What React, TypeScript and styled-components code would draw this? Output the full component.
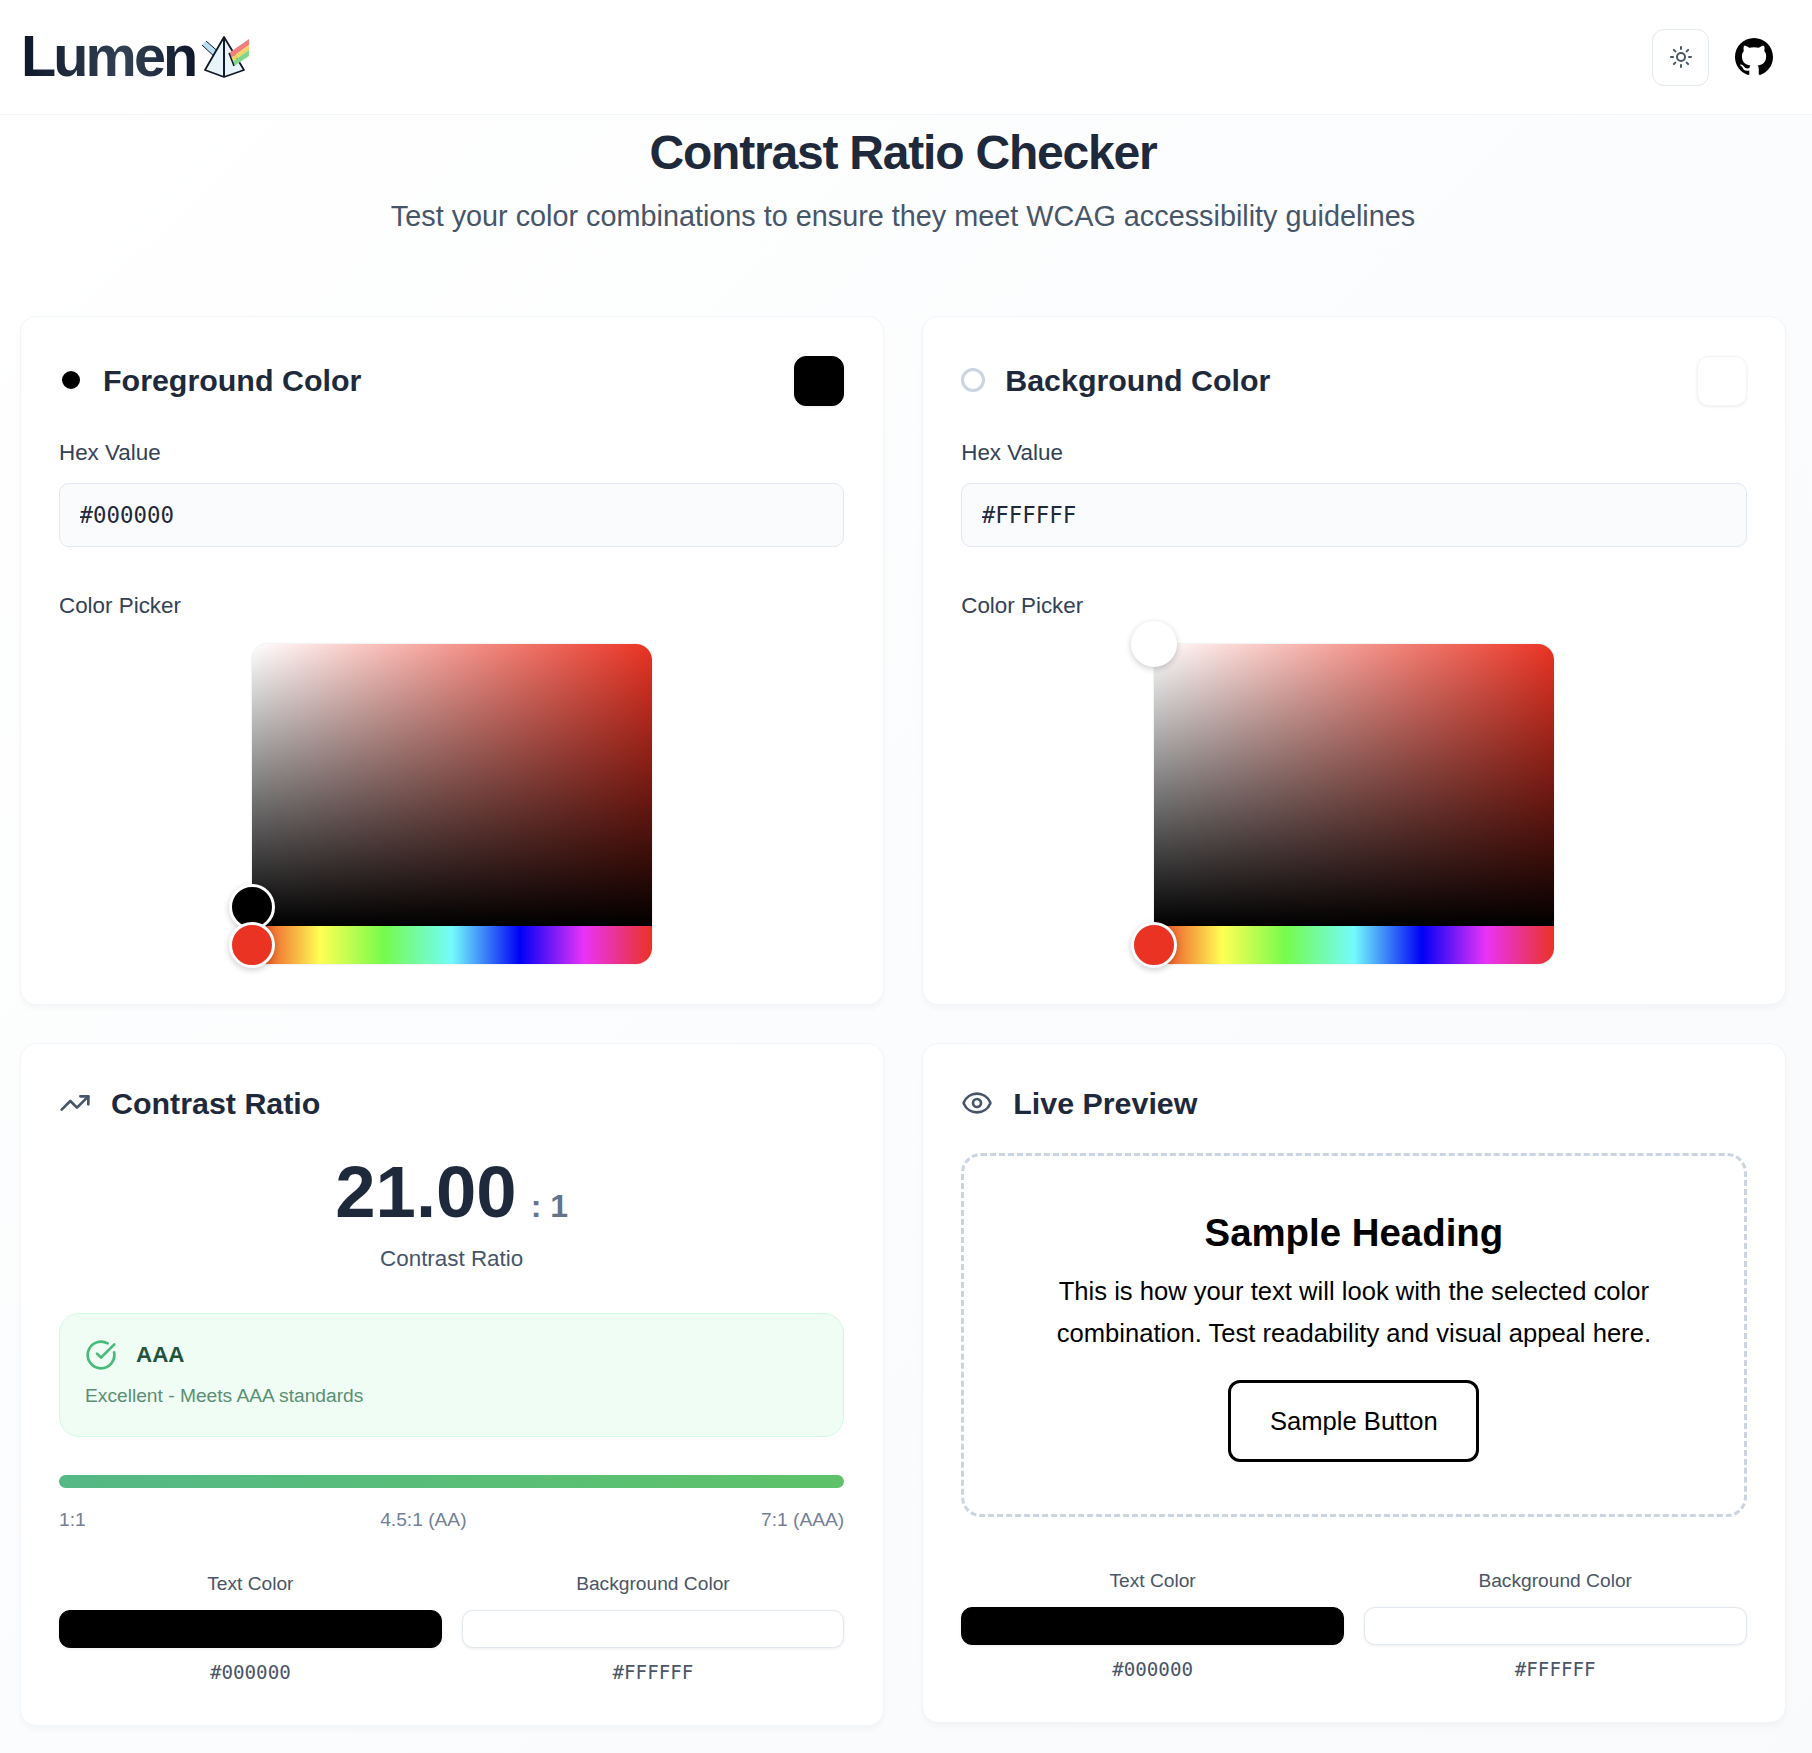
import React from 'react';
import styled, { createGlobalStyle } from 'styled-components';
import { Sun, TrendingUp, Eye, CircleCheckBig } from 'lucide-react';
import { BsGithub } from 'react-icons/bs';

const GlobalStyle = createGlobalStyle`
	* {
		box-sizing: border-box;
	}

	body {
		margin: 0;
		font-family: "Liberation Sans", Arial, sans-serif;
		color: #1e293b;
		background: linear-gradient(135deg, #ffffff 0%, #f8fafc 100%);
	}
`;

const Page = styled.div`
	min-height: 1753px;
`;

const Nav = styled.nav`
	display: flex;
	align-items: center;
	justify-content: space-between;
	height: 115px;
	padding: 0 39px 0 21px;
	background: #fff;
	border-bottom: 1px solid #f1f5f9;
`;

const Brand = styled.div`
	display: flex;
	align-items: center;
	gap: 5px;
`;

const BrandText = styled.span`
	font-size: 57.6px;
	font-weight: 700;
	line-height: 1;
	letter-spacing: -0.05em;
	background: linear-gradient(90deg, #0f172a, #334155 60%, #0f172a);
	-webkit-background-clip: text;
	background-clip: text;
	color: transparent;
`;

const NavActions = styled.div`
	display: flex;
	align-items: center;
	gap: 26px;
`;

const IconButton = styled.button`
	display: flex;
	align-items: center;
	justify-content: center;
	width: 57px;
	height: 57px;
	padding: 0;
	color: #475569;
	background: #fff;
	border: 1px solid #e2e8f0;
	border-radius: 12px;
`;

const GithubLink = styled.a`
	display: flex;
	color: #000;
`;

const Hero = styled.header`
	padding: 8px 6px 0 0;
	margin-bottom: 82px;
	text-align: center;
`;

const Title = styled.h1`
	margin: 0 0 15px;
	font-size: 48px;
	font-weight: 700;
	line-height: 60px;
	letter-spacing: -0.025em;
	color: #1e293b;
`;

const Subtitle = styled.p`
	margin: 0;
	font-size: 28.8px;
	line-height: 36px;
	color: #475569;
`;

const Grid = styled.main`
	display: grid;
	grid-template-columns: 1fr 1fr;
	align-items: start;
	gap: 38px 38px;
	padding: 0 26px 0 19.5px;
`;

const Card = styled.section`
	padding: 39px 38.5px;
	background: #fff;
	border: 1px solid #f1f5f9;
	border-radius: 16px;
	box-shadow: 0 4px 6px rgba(15, 23, 42, 0.03);
`;

const CardHead = styled.div<{ $gap: number }>`
	display: flex;
	align-items: center;
	justify-content: space-between;
	margin-bottom: ${(p) => p.$gap}px;
`;

const HeadLeft = styled.div`
	display: flex;
	align-items: center;
	gap: 20px;
`;

const ColorHeadLeft = styled(HeadLeft)`
	padding-bottom: 2px;
`;

const CardTitle = styled.h2`
	margin: 0;
	font-size: 30.4px;
	font-weight: 700;
	line-height: 40px;
	color: #1e293b;
`;

const Dot = styled.span<{ $color: string; $ring: string }>`
	display: block;
	width: 24px;
	height: 24px;
	background: ${(p) => p.$color};
	border: 3px solid ${(p) => p.$ring};
	border-radius: 50%;
`;

const HeaderSwatch = styled.div<{ $color: string }>`
	width: 50px;
	height: 50px;
	background: ${(p) => p.$color};
	border: 1px solid ${(p) => (p.$color === '#000' ? '#000' : '#f1f5f9')};
	border-radius: 12px;
	box-shadow: 0 1px 3px rgba(15, 23, 42, 0.08);
`;

const FieldLabel = styled.label`
	display: block;
	margin-bottom: 17px;
	font-size: 22.4px;
	line-height: 28px;
	color: #334155;
`;

const HexLabel = styled(FieldLabel)`
	margin-top: 33px;
	margin-bottom: 16px;
`;

const HexInput = styled.input`
	display: block;
	width: 100%;
	height: 64px;
	margin-bottom: 45px;
	padding: 0 19.5px;
	font-family: "DejaVu Sans Mono", monospace;
	font-size: 22.4px;
	color: #1e293b;
	background: #fafbfc;
	border: 1px solid #e2e8f0;
	border-radius: 10px;
`;

const PickerLabel = styled(FieldLabel)`
	margin-bottom: 24px;
`;

const Picker = styled.div`
	position: relative;
	width: 400px;
	height: 320px;
	margin: 0 auto 1px;
	display: flex;
	flex-direction: column;
	border-radius: 16px;
	box-shadow: 0 0 2px rgba(15, 23, 42, 0.2);
`;

const Saturation = styled.div`
	flex: 1;
	border-radius: 16px 16px 0 0;
	background: linear-gradient(to top, #000, rgba(0, 0, 0, 0)),
		linear-gradient(to right, #fff, #ea3323);
`;

const HueBar = styled.div`
	height: 38px;
	border-radius: 0 0 16px 16px;
	background: linear-gradient(
		to right,
		#ea3323 0%,
		#ffff54 17%,
		#75fb4c 33%,
		#73fbfd 50%,
		#0000f5 67%,
		#ea33f7 83%,
		#ea3323 100%
	);
`;

const Pointer = styled.div<{ $color: string; $left: number; $top: number }>`
	position: absolute;
	left: ${(p) => p.$left}px;
	top: ${(p) => p.$top}px;
	width: 46px;
	height: 46px;
	transform: translate(-50%, -50%);
	background: ${(p) => p.$color};
	border: 3px solid #fff;
	border-radius: 50%;
	box-shadow: 0 2px 6px rgba(0, 0, 0, 0.2);
`;

const RatioRow = styled.div`
	display: flex;
	align-items: baseline;
	justify-content: center;
	gap: 14px;
`;

const RatioValue = styled.span`
	font-size: 72.5px;
	font-weight: 700;
	line-height: 74px;
	color: #1e293b;
`;

const RatioSuffix = styled.span`
	font-size: 32px;
	font-weight: 700;
	color: #64748b;
`;

const RatioCaption = styled.div`
	margin: 16px 0 40px;
	font-size: 22.4px;
	line-height: 28px;
	text-align: center;
	color: #475569;
`;

const Status = styled.div`
	height: 124px;
	padding: 25px 25px 0;
	background: #f0fdf4;
	border: 1px solid #d1fae5;
	border-radius: 20px;
`;

const StatusHead = styled.div`
	display: flex;
	align-items: center;
	gap: 19px;
	margin-bottom: 12px;
	font-size: 22.4px;
	font-weight: 700;
	line-height: 32px;
	color: #22543d;
`;

const StatusText = styled.div`
	font-size: 19.2px;
	line-height: 26px;
	color: #5a8f73;
`;

const Progress = styled.div`
	height: 13px;
	margin-top: 38px;
	border-radius: 7px;
	background: linear-gradient(90deg, #55b886, #5ec269);
`;

const Ticks = styled.div`
	display: flex;
	justify-content: space-between;
	margin: 20px 0 39px;
	font-size: 19.2px;
	line-height: 24px;
	color: #718096;
`;

const Pair = styled.div`
	display: grid;
	grid-template-columns: 1fr 1fr;
	gap: 20px;
`;

const PairItem = styled.div`
	text-align: center;
`;

const PairLabel = styled.div`
	margin-bottom: 13px;
	font-size: 19.2px;
	line-height: 26px;
	color: #4a5568;
`;

const PairSwatch = styled.div<{ $color: string }>`
	height: 38px;
	margin-bottom: 12px;
	background: ${(p) => p.$color};
	border: 1px solid ${(p) => (p.$color === '#000' ? '#000' : '#e2e8f0')};
	border-radius: 11px;
	box-shadow: 0 1px 3px rgba(15, 23, 42, 0.08);
`;

const PairHex = styled.div`
	font-family: "DejaVu Sans Mono", monospace;
	font-size: 19.2px;
	line-height: 26px;
	color: #4a5568;
`;

const Preview = styled.div`
	height: 364px;
	margin-bottom: 51px;
	padding-top: 54px;
	text-align: center;
	color: #000;
	background: #fff;
	border: 3px dashed #cbd5e1;
	border-radius: 20px;
`;

const PreviewHeading = styled.h3`
	margin: 0 0 15px;
	font-size: 38.4px;
	font-weight: 700;
	line-height: 46px;
`;

const PreviewText = styled.p`
	margin: 0 auto 26px;
	width: 640px;
	font-size: 25.6px;
	line-height: 41.5px;
`;

const PreviewButton = styled.button`
	width: 251px;
	height: 82px;
	font-family: inherit;
	font-size: 25.6px;
	color: #000;
	background: transparent;
	border: 3px solid #000;
	border-radius: 12px;
`;

const PrismLogo = () => (
	<svg width="50" height="42" viewBox="0 0 50 42">
		<polygon points="2,9 6,5 21,18 17,23" fill="#b9dff0" />
		<path d="M6 5 L21 18 M2 9 L17 23" stroke="#111827" strokeWidth="1" fill="none" />
		<polygon points="24,1 5,34 24,41 44,34" fill="#e8f4fa" stroke="#111827" strokeWidth="1.8" strokeLinejoin="round" />
		<line x1="24" y1="2" x2="24" y2="40" stroke="#111827" strokeWidth="2" />
		<polygon points="29,17 49,3 49,9 31,22" fill="#ee7f7c" />
		<polygon points="31,22 49,9 49,14 32,26" fill="#f3d463" />
		<polygon points="32,26 49,14 49,20 34,30" fill="#7fd68a" />
		<path d="M29 17 L34 30" stroke="#111827" strokeWidth="1.5" fill="none" />
	</svg>
);

const ColorPair = () => (
	<Pair>
		<PairItem>
			<PairLabel>Text Color</PairLabel>
			<PairSwatch $color="#000" />
			<PairHex>#000000</PairHex>
		</PairItem>
		<PairItem>
			<PairLabel>Background Color</PairLabel>
			<PairSwatch $color="#fff" />
			<PairHex>#FFFFFF</PairHex>
		</PairItem>
	</Pair>
);

type ColorCardProps = {
	title: string;
	hex: string;
	color: string;
	ring: string;
	pointerTop: number;
};

const ColorCard = ({ title, hex, color, ring, pointerTop }: ColorCardProps) => (
	<Card>
		<CardHead $gap={0}>
			<ColorHeadLeft>
				<Dot $color={color} $ring={ring} />
				<CardTitle>{title}</CardTitle>
			</ColorHeadLeft>
			<HeaderSwatch $color={color} />
		</CardHead>
		<HexLabel>Hex Value</HexLabel>
		<HexInput readOnly value={hex} />
		<PickerLabel>Color Picker</PickerLabel>
		<Picker>
			<Saturation />
			<HueBar />
			<Pointer $color={color} $left={0} $top={pointerTop} />
			<Pointer $color="#ea3323" $left={0} $top={301} />
		</Picker>
	</Card>
);

export default function App() {
	return (
		<Page>
			<GlobalStyle />
			<Nav>
				<Brand>
					<BrandText>Lumen</BrandText>
					<PrismLogo />
				</Brand>
				<NavActions>
					<IconButton aria-label="Toggle theme">
						<Sun size={24} />
					</IconButton>
					<GithubLink href="#" aria-label="GitHub">
						<BsGithub size={38} />
					</GithubLink>
				</NavActions>
			</Nav>
			<Hero>
				<Title>Contrast Ratio Checker</Title>
				<Subtitle>Test your color combinations to ensure they meet WCAG accessibility guidelines</Subtitle>
			</Hero>
			<Grid>
				<ColorCard title="Foreground Color" hex="#000000" color="#000" ring="#fff" pointerTop={263} />
				<ColorCard title="Background Color" hex="#FFFFFF" color="#fff" ring="#cbd5e1" pointerTop={0} />
				<Card>
					<CardHead $gap={32}>
						<HeadLeft>
							<TrendingUp size={32} color="#475569" />
							<CardTitle>Contrast Ratio</CardTitle>
						</HeadLeft>
					</CardHead>
					<RatioRow>
						<RatioValue>21.00</RatioValue>
						<RatioSuffix>: 1</RatioSuffix>
					</RatioRow>
					<RatioCaption>Contrast Ratio</RatioCaption>
					<Status>
						<StatusHead>
							<CircleCheckBig size={32} color="#48bb78" />
							AAA
						</StatusHead>
						<StatusText>Excellent - Meets AAA standards</StatusText>
					</Status>
					<Progress />
					<Ticks>
						<span>1:1</span>
						<span>4.5:1 (AA)</span>
						<span>7:1 (AAA)</span>
					</Ticks>
					<ColorPair />
				</Card>
				<Card>
					<CardHead $gap={30}>
						<HeadLeft>
							<Eye size={32} color="#475569" />
							<CardTitle>Live Preview</CardTitle>
						</HeadLeft>
					</CardHead>
					<Preview>
						<PreviewHeading>Sample Heading</PreviewHeading>
						<PreviewText>
							This is how your text will look with the selected color combination. Test readability and visual appeal here.
						</PreviewText>
						<PreviewButton>Sample Button</PreviewButton>
					</Preview>
					<ColorPair />
				</Card>
			</Grid>
		</Page>
	);
}
